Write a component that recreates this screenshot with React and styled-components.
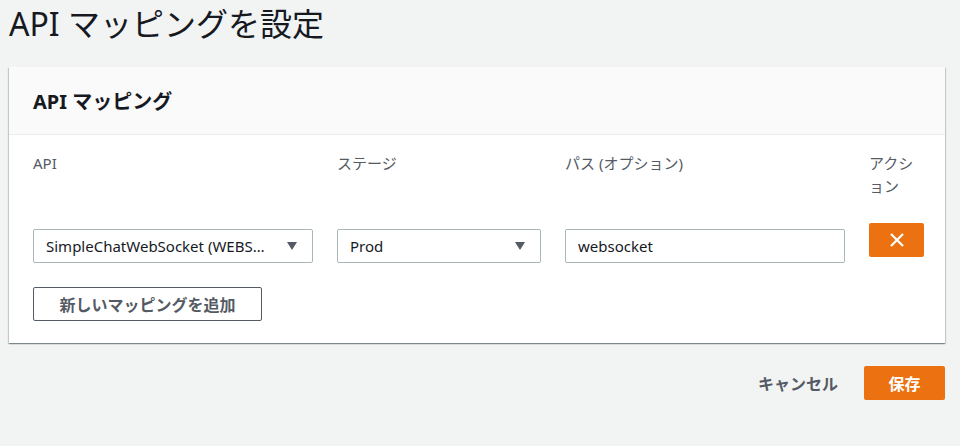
import styled, { createGlobalStyle } from 'styled-components';

const GlobalStyle = createGlobalStyle`
  body {
    margin: 0;
    background-color: #f2f3f3;
    font-family: "Noto Sans", "Noto Sans CJK JP", sans-serif;
    color: #16191f;
  }
`;

const Page = styled.div`
  padding: 2px 15px 0 9px;
`;

const Title = styled.h1`
  margin: 0;
  font-size: 32px;
  font-weight: 400;
  line-height: 44px;
  color: #16191f;
`;

const Card = styled.section`
  margin-top: 21px;
  background: #fff;
  box-shadow: 0 1px 1px 0 rgba(0, 28, 36, 0.3), 1px 1px 1px 0 rgba(0, 28, 36, 0.15),
    -1px 1px 1px 0 rgba(0, 28, 36, 0.15);
`;

const CardHeader = styled.header`
  height: 67px;
  display: flex;
  align-items: center;
  padding: 0 24px;
  background: #fafafa;
  border-bottom: 1px solid #eaeded;
`;

const CardTitle = styled.h2`
  margin: 0;
  font-size: 20px;
  font-weight: 700;
  color: #16191f;
`;

const CardBody = styled.div`
  padding: 17px 21px 22px 24px;
`;

const Grid = styled.div`
  display: grid;
  grid-template-columns: 280px 204px 280px 55px;
  column-gap: 24px;
  align-items: start;
`;

const Label = styled.div`
  font-size: 15px;
  line-height: 23px;
  color: #545b64;
  height: 71px;
  width: ${({ narrow }) => (narrow ? '50px' : 'auto')};
`;

const Field = styled.div`
  height: 34px;
  box-sizing: border-box;
  border: 1px solid #aab7b8;
  border-radius: 2px;
  display: flex;
  align-items: center;
  padding: 0 ${({ select }) => (select ? '15px' : '12px')} 0 12px;
  font-size: 15px;
  color: #16191f;
  gap: 6px;
  margin-top: 6px;
`;

const FieldText = styled.span`
  flex: 1;
  overflow: hidden;
  white-space: nowrap;
  text-overflow: ellipsis;
`;

const Caret = styled.span`
  width: 0;
  height: 0;
  border-left: 5.5px solid transparent;
  border-right: 5.5px solid transparent;
  border-top: 8px solid #545b64;
`;

const RemoveButton = styled.button`
  width: 55px;
  height: 34px;
  border: none;
  border-radius: 2px;
  background: #ec7211;
  display: flex;
  align-items: center;
  justify-content: center;
  padding: 0;
`;

const OutlineButton = styled.button`
  margin-top: 24px;
  width: 229px;
  height: 34px;
  background: #fff;
  border: 1px solid #545b64;
  border-radius: 2px;
  font-family: inherit;
  font-size: 16px;
  font-weight: 700;
  color: #545b64;
`;

const Footer = styled.div`
  display: flex;
  justify-content: flex-end;
  align-items: center;
  gap: 26px;
  margin-top: 23px;
`;

const TextButton = styled.button`
  background: none;
  border: none;
  font-family: inherit;
  font-size: 16px;
  font-weight: 700;
  color: #545b64;
  padding: 0;
`;

const PrimaryButton = styled.button`
  width: 81px;
  height: 34px;
  background: #ec7211;
  border: none;
  border-radius: 2px;
  color: #fff;
  font-family: inherit;
  font-size: 16px;
  font-weight: 700;
`;

const App = () => (
  <>
    <GlobalStyle />
    <Page>
      <Title>API マッピングを設定</Title>
      <Card>
        <CardHeader>
          <CardTitle>API マッピング</CardTitle>
        </CardHeader>
        <CardBody>
          <Grid>
            <Label>API</Label>
            <Label>ステージ</Label>
            <Label>パス (オプション)</Label>
            <Label narrow>アクション</Label>
            <Field select>
              <FieldText>SimpleChatWebSocket (WEBS…</FieldText>
              <Caret />
            </Field>
            <Field select>
              <FieldText>Prod</FieldText>
              <Caret />
            </Field>
            <Field>
              <FieldText>websocket</FieldText>
            </Field>
            <RemoveButton aria-label="削除">
              <svg width="16" height="16" viewBox="0 0 16 16">
                <path d="M2 2 L14 14 M14 2 L2 14" stroke="#fff" strokeWidth="2.2" fill="none" />
              </svg>
            </RemoveButton>
          </Grid>
          <OutlineButton>新しいマッピングを追加</OutlineButton>
        </CardBody>
      </Card>
      <Footer>
        <TextButton>キャンセル</TextButton>
        <PrimaryButton>保存</PrimaryButton>
      </Footer>
    </Page>
  </>
);

export default App;
